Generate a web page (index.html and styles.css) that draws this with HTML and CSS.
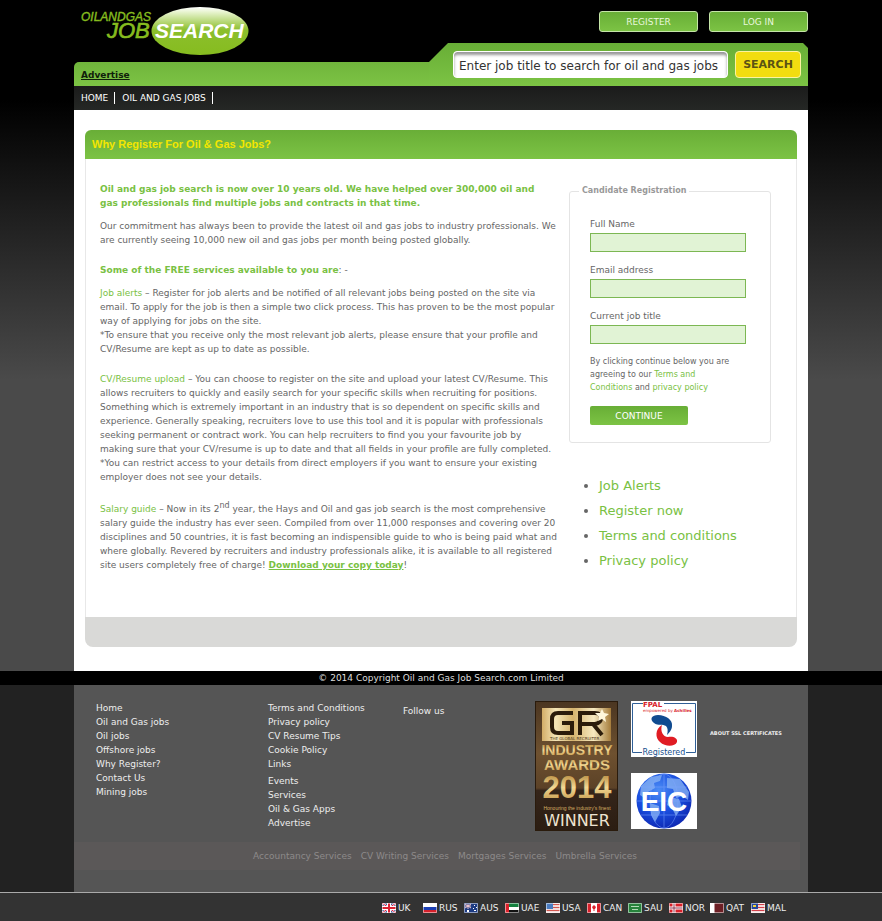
FILE: index.html
```html
<!DOCTYPE html>
<html lang="en">
<head>
<meta charset="utf-8">
<title>Why Register For Oil &amp; Gas Jobs?</title>
<link rel="stylesheet" href="styles.css">
</head>
<body>
<header class="wrap top">
  <div class="top-left">
    <a class="logo" href="#" aria-label="Oil and Gas Job Search">
      <svg width="175" height="56" viewBox="0 0 175 56">
        <defs>
          <linearGradient id="oval" x1="0" y1="0" x2="0" y2="1">
            <stop offset="0" stop-color="#fff"/>
            <stop offset=".12" stop-color="#e4f2c8"/>
            <stop offset=".48" stop-color="#8cbf2c"/>
            <stop offset="1" stop-color="#86bc1f"/>
          </linearGradient>
        </defs>
        <text class="logo-small" x="7" y="21">OILANDGAS</text>
        <text class="logo-job" x="33" y="38">JOB</text>
        <ellipse cx="126" cy="31" rx="48.500" ry="24" fill="url(#oval)"/>
        <text class="logo-search" x="81" y="38">SEARCH</text>
      </svg>
    </a>
    <div class="advert"><a href="#">Advertise</a></div>
  </div>
  <div class="top-right">
    <div class="account"><a class="btn" href="#">REGISTER</a><a class="btn" href="#">LOG IN</a></div>
    <form class="search">
      <input type="text" aria-label="Job title" value="Enter job title to search for oil and gas jobs">
      <button type="button">SEARCH</button>
    </form>
  </div>
</header>
<nav class="wrap nav"><a href="#">HOME</a><a href="#">OIL AND GAS JOBS</a></nav>

<main class="wrap main">
  <section class="panel">
    <h1>Why Register For Oil &amp; Gas Jobs?</h1>
    <div class="panel-body">
      <article class="copy">
        <h2>Oil and gas job search is now over 10 years old. We have helped over 300,000 oil and gas professionals find multiple jobs and contracts in that time.</h2>
        <p class="wide">Our commitment has always been to provide the latest oil and gas jobs to industry professionals. We are currently seeing 10,000 new oil and gas jobs per month being posted globally.</p>
        <p><strong>Some of the FREE services available to you are</strong>: -</p>
        <p class="wide"><a href="#">Job alerts</a> – Register for job alerts and be notified of all relevant jobs being posted on the site via email. To apply for the job is then a simple two click process. This has proven to be the most popular way of applying for jobs on the site.<br>*To ensure that you receive only the most relevant job alerts, please ensure that your profile and CV/Resume are kept as up to date as possible.</p>
        <p class="wide"><a href="#">CV/Resume upload</a> – You can choose to register on the site and upload your latest CV/Resume. This allows recruiters to quickly and easily search for your specific skills when recruiting for positions. Something which is extremely important in an industry that is so dependent on specific skills and experience. Generally speaking, recruiters love to use this tool and it is popular with professionals seeking permanent or contract work. You can help recruiters to find you your favourite job by making&nbsp;sure that your CV/resume is up to date and that all fields in your profile are fully completed.<br>*You can restrict access to your details from direct employers if you want to ensure your existing employer does not see your details.</p>
        <p><a href="#">Salary guide</a> – Now in its 2<sup>nd</sup> year, the Hays and Oil and gas job search is the most comprehensive salary guide the industry has ever seen. Compiled from over 11,000 responses and covering over 20 disciplines and 50 countries, it is fast becoming an indispensible guide to who is being paid what and where globally. Revered by recruiters and industry professionals alike, it is available to all registered site users completely free of charge! <a class="download" href="#">Download your copy today</a>!</p>
      </article>
      <aside class="side">
        <form>
          <fieldset>
            <legend>Candidate Registration</legend>
            <label for="name">Full Name</label><input id="name" type="text">
            <label for="email">Email address</label><input id="email" type="text">
            <label for="job">Current job title</label><input id="job" type="text">
            <p>By clicking continue below you are agreeing to our <a href="#">Terms and Conditions</a> and <a href="#">privacy policy</a></p>
            <button type="button">CONTINUE</button>
          </fieldset>
        </form>
        <ul>
          <li><a href="#">Job Alerts</a></li>
          <li><a href="#">Register now</a></li>
          <li><a href="#">Terms and conditions</a></li>
          <li><a href="#">Privacy policy</a></li>
        </ul>
      </aside>
    </div>
    <div class="panel-foot"></div>
  </section>
</main>

<div class="copyright">© 2014 Copyright Oil and Gas Job Search.com Limited</div>

<footer>
  <div class="wrap foot">
    <div class="foot-cols">
      <ul class="links-a"><li><a href="#">Home</a></li><li><a href="#">Oil and Gas jobs</a></li><li><a href="#">Oil jobs</a></li><li><a href="#">Offshore jobs</a></li><li><a href="#">Why Register?</a></li><li><a href="#">Contact Us</a></li><li><a href="#">Mining jobs</a></li></ul>
      <div class="links-b">
        <ul><li><a href="#">Terms and Conditions</a></li><li><a href="#">Privacy policy</a></li><li><a href="#">CV Resume Tips</a></li><li><a href="#">Cookie Policy</a></li><li><a href="#">Links</a></li></ul>
        <ul><li><a href="#">Events</a></li><li><a href="#">Services</a></li><li><a href="#">Oil &amp; Gas Apps</a></li><li><a href="#">Advertise</a></li></ul>
      </div>
      <div class="follow">Follow us</div>
      <svg class="award" width="83" height="130" viewBox="0 0 83 130">
        <defs>
          <linearGradient id="brown" x1="0" y1="0" x2="0" y2="1"><stop offset="0" stop-color="#4b3621"/><stop offset=".4" stop-color="#6e5130"/><stop offset=".67" stop-color="#5c4227"/><stop offset=".69" stop-color="#35251a"/><stop offset="1" stop-color="#2b1d12"/></linearGradient>
          <linearGradient id="plate" x1="0" y1="0" x2="1" y2="0"><stop offset="0" stop-color="#d2ad68"/><stop offset=".2" stop-color="#f5e6b8"/><stop offset=".45" stop-color="#d5b36d"/><stop offset=".75" stop-color="#f6e9c0"/><stop offset="1" stop-color="#a57c3b"/></linearGradient>
          <linearGradient id="gold" x1="0" y1="0" x2="0" y2="1"><stop offset="0" stop-color="#a87829"/><stop offset=".5" stop-color="#f2d893"/><stop offset="1" stop-color="#bb8a3b"/></linearGradient>
        </defs>
        <rect x=".5" y=".5" width="82" height="129" fill="url(#brown)" stroke="#2a1b0c"/>
        <rect x="7" y="7" width="69" height="33" fill="url(#plate)"/>
        <g fill="none" stroke="#2b1c0b" stroke-width="4">
          <path d="M38 12H23Q17 12 17 18V26Q17 32 23 32H37V22H27"/>
          <path d="M45 34V12H60Q66 12 66 17T60 23H45M58 23L67 34"/>
        </g>
        <path d="M67 8l2 4 5 1-4 3 1 5-4-3-4 2 1-4-4-4 5 0z" fill="#fff8dc"/>
        <text x="15" y="39" class="aw-tiny">THE GLOBAL RECRUITER</text>
        <g fill="url(#gold)">
          <text x="42" y="54" class="aw-mid">INDUSTRY</text>
          <text x="42" y="69" class="aw-mid aw-wide">AWARDS</text>
          <text x="42" y="97" class="aw-year">2014</text>
        </g>
        <text x="42" y="109" class="aw-note">Honouring the industry's finest</text>
        <text x="42" y="125" class="aw-win">WINNER</text>
      </svg>
      <div class="badges">
        <svg width="66" height="56" viewBox="0 0 66 56">
          <rect width="66" height="56" fill="#fff"/>
          <path d="M12 2.500H1.500V51.500H11M33 2.500H64.500V51.500H55" fill="none" stroke="#2f5f97"/>
          <text x="12" y="6" class="fpal">FPAL</text>
          <text x="12" y="11" class="fpal-s">empowered by <tspan class="ach">Achilles</tspan></text>
          <path d="M35 25C32 23 27 25 23 22C18 18 21 14 27 14C35 14 42 19 41 25C41 29 38 32 36 34C37 30 37 27 35 25Z" fill="#104b90"/>
          <path d="M31 24C24 28 24 37 29 41C34 46 44 46 46 41C47 37 42 35 37 36C32 36 29 30 31 24Z" fill="#e01c24"/>
          <text x="33" y="54" class="reg">Registered</text>
        </svg>
        <svg width="66" height="56" viewBox="0 0 66 56">
          <defs><radialGradient id="globe" cx=".4" cy=".3" r=".8"><stop offset="0" stop-color="#4b8cf5"/><stop offset=".5" stop-color="#1a4fe0"/><stop offset="1" stop-color="#0b1fa8"/></radialGradient></defs>
          <rect width="66" height="56" fill="#fff"/>
          <circle cx="33" cy="28" r="27.500" fill="url(#globe)"/>
          <g fill="#8bb6f4" opacity=".75"><path d="M10 13L20 4 31 2 29 8 23 10 24 15 17 19 15 26 9 22Z"/><path d="M19 30L28 33 29 40 24 49 20 42Z"/><path d="M36 5L49 6 58 19 57 27 51 23 45 25 42 16 36 15Z"/><path d="M38 24L48 26 51 34 45 43 41 35 36 32Z"/></g>
          <g fill="none" stroke="#7ea5ff" opacity=".5"><ellipse cx="33" cy="28" rx="14" ry="27"/><path d="M33 1V55M6 28H60M10 14H56M10 42H56"/></g>
          <text x="33" y="38" class="eic">EIC</text>
        </svg>
      </div>
      <a class="ssl" href="#">ABOUT SSL CERTIFICATES</a>
    </div>
    <div class="services"><a href="#">Accountancy Services</a><a href="#">CV Writing Services</a><a href="#">Mortgages Services</a><a href="#">Umbrella Services</a></div>
  </div>
</footer>

<div class="countries">
  <div class="wrap flags">
    <a href="#"><svg width="14" height="10" viewBox="0 0 14 10"><path fill="#334f91" d="M0 0h14v10H0z"/><path d="M0 0L14 10M14 0L0 10" stroke="#fff" stroke-width="2"/><path d="M0 0L14 10M14 0L0 10" stroke="#d24"/><path d="M7 0V10M0 5H14" stroke="#fff" stroke-width="4"/><path d="M7 0V10M0 5H14" stroke="#d23" stroke-width="2"/><path class="edge" d="M.5.5h13v9H.5z"/></svg>UK</a>
    <a href="#"><svg width="14" height="10" viewBox="0 0 14 10"><path fill="#fff" d="M0 0h14v4H0z"/><path fill="#1b3fb5" d="M0 4h14v3H0z"/><path fill="#d4202b" d="M0 7h14v3H0z"/><path class="edge" d="M.5.5h13v9H.5z"/></svg>RUS</a>
    <a href="#"><svg width="14" height="10" viewBox="0 0 14 10"><path fill="#1d3b82" d="M0 0h14v10H0z"/><path d="M1 1L7 5M7 1L1 5M4 1V6M1 3H7" stroke="#f3c9cf"/><path fill="#fff" d="M3 7h2v2H3zM10 2h1v1h-1zM9 5h1v1H9zM12 4h1v1h-1zM10 7h2v1h-2z"/><path class="edge" d="M.5.5h13v9H.5z"/></svg>AUS</a>
    <a href="#"><svg width="14" height="10" viewBox="0 0 14 10"><path fill="#15813f" d="M0 0h14v4H0z"/><path fill="#fff" d="M0 4h14v3H0z"/><path fill="#111" d="M0 7h14v3H0z"/><path fill="#d9202a" d="M0 0h4v10H0z"/><path class="edge" d="M.5.5h13v9H.5z"/></svg>UAE</a>
    <a href="#"><svg width="14" height="10" viewBox="0 0 14 10"><path fill="#f3dada" d="M0 0h14v10H0z"/><path d="M0 1.500H14M0 4.500H14M0 7.500H14" stroke="#d3564f"/><path fill="#4a7cc0" d="M0 0h7v6H0z"/><path class="edge" d="M.5.5h13v9H.5z"/></svg>USA</a>
    <a href="#"><svg width="14" height="10" viewBox="0 0 14 10"><path fill="#d9202a" d="M0 0h14v10H0z"/><path fill="#fff" d="M4 0h6v10H4z"/><path fill="#d9202a" d="M7 2l2 2-1 2H6L5 4zM6.500 6h1v2h-1z"/><path class="edge" d="M.5.5h13v9H.5z"/></svg>CAN</a>
    <a href="#"><svg width="14" height="10" viewBox="0 0 14 10"><path fill="#27833c" d="M0 0h14v10H0z"/><path d="M3 3.500H11M4 6.500H10" stroke="#b5dbb9"/><path class="edge" d="M.5.5h13v9H.5z"/></svg>SAU</a>
    <a href="#"><svg width="14" height="10" viewBox="0 0 14 10"><path fill="#d9202a" d="M0 0h14v10H0z"/><path d="M5 0V10M0 5H14" stroke="#fff" stroke-width="3"/><path d="M5 0V10M0 5H14" stroke="#8a3550"/><path class="edge" d="M.5.5h13v9H.5z"/></svg>NOR</a>
    <a href="#"><svg width="14" height="10" viewBox="0 0 14 10"><path fill="#6d1f25" d="M0 0h14v10H0z"/><path fill="#fff" d="M0 0h4l1 1-1 1 1 1-1 1 1 1-1 1 1 1-1 1 1 1-1 1H0z"/><path class="edge" d="M.5.5h13v9H.5z"/></svg>QAT</a>
    <a href="#"><svg width="14" height="10" viewBox="0 0 14 10"><path fill="#f3dada" d="M0 0h14v10H0z"/><path d="M0 1.500H14M0 4.500H14M0 7.500H14" stroke="#d3404a"/><path fill="#26489c" d="M0 0h7v6H0z"/><path fill="#f2d13c" d="M2 2h3v2H2z"/><path class="edge" d="M.5.5h13v9H.5z"/></svg>MAL</a>
  </div>
</div>
</body>
</html>
```

FILE: styles.css
```css
* { box-sizing: border-box; }
body {
  margin: 0;
  font: 9px/14px "DejaVu Sans", sans-serif;
  color: #666;
  background: linear-gradient(#000 100px, #4a4a4a 380px);
}
a { color: inherit; text-decoration: none; }
ul { margin: 0; padding: 0; list-style: none; }
input, button { font: inherit; border-radius: 0; }
.wrap { max-width: 734px; margin: 0 auto; }

.top { display: flex; height: 86px; }
.top-left { flex: 1; display: flex; flex-direction: column; }
.logo { height: 62px; }
.logo svg { display: block; }
.logo-small, .logo-job, .logo-search { font-family: "Liberation Sans", sans-serif; font-style: italic; }
.logo-small { font-size: 12px; fill: #86bc1f; stroke: #86bc1f; stroke-width: .4; }
.logo-job { font-size: 22px; fill: #86bc1f; stroke: #86bc1f; stroke-width: .7; }
.logo-search { font-size: 21px; font-weight: bold; fill: #fff; }
.advert {
  height: 24px;
  padding: 6px 7px;
  background: linear-gradient(#70b53c, #7cc344);
  border-top-left-radius: 5px;
  font-size: 9px;
  font-weight: bold;
}
.advert a { color: #10200a; text-decoration: underline; }
.top-right { width: 379px; }
.account { display: flex; justify-content: flex-end; gap: 11px; height: 43px; padding-top: 11px; }
.btn {
  width: 99px;
  height: 21px;
  border: 1px solid #c5e5a8;
  border-radius: 3px;
  background: linear-gradient(#68ae36, #7cc344);
  color: #e9f8dc;
  text-align: center;
  line-height: 20px;
}
.search {
  display: flex;
  gap: 7px;
  height: 43px;
  padding: 8px 7px 0 24px;
  background: linear-gradient(#68ae36, #7cc344);
  clip-path: polygon(0 100%, 0 19px, 19px 0, calc(100% - 5px) 0, 100% 5px, 100% 100%);
}
.search input {
  flex: 1;
  min-width: 0;
  height: 27px;
  padding: 3px 5px 0;
  border: 1px solid #fff;
  border-radius: 4px;
  box-shadow: inset 0 3px 3px #999;
  font-size: 12px;
  color: #333;
}
.search button {
  width: 66px;
  height: 27px;
  padding: 0;
  border: 1px solid #fbf3a0;
  border-radius: 4px;
  background: #f2dd10;
  color: #5b5314;
  font-size: 11px;
  font-weight: bold;
}
.nav { display: flex; height: 24px; padding: 6px 0; background: linear-gradient(#1b1b1b, #252725); color: #fff; }
.nav a { padding: 0 6px 0 7px; height: 12px; line-height: 12px; border-right: 1px solid #fff; }

.main { padding: 20px 11px 24px; background: #fff; }
h1 {
  margin: 0;
  padding: 0 7px;
  height: 29px;
  line-height: 28px;
  border-radius: 6px 6px 0 0;
  background: linear-gradient(#69ae37, #7cc344);
  color: #f4e600;
  font-family: "Liberation Sans", sans-serif;
  font-size: 11px;
}
.panel-body { display: flex; min-height: 458px; border: 1px solid #e8e8e8; border-width: 0 1px; }
.copy { flex: 1; padding: 23px 0 0 14px; }
.copy p { margin: 0 0 9px; }
.copy .wide { margin-bottom: 16px; }
h2 { margin: 0 0 9px; padding-right: 12px; font-size: 9px; line-height: 14px; color: #79c143; }
.copy strong, .copy a, .side p a, .side li a { color: #79c143; }
.copy .download { font-weight: bold; text-decoration: underline; }
sup { font-size: 8px; line-height: 12px; }
.side { width: 237px; padding: 25px 25px 0 10px; }
fieldset { margin: 0; padding: 19px 24px 17px 20px; border: 1px solid #e4e4e4; border-radius: 3px; }
legend { margin-left: -11px; padding: 0 3px; color: #999; font-size: 8px; font-weight: bold; }
label { display: block; margin-bottom: 2px; }
fieldset input { display: block; width: 100%; height: 19px; margin-bottom: 11px; border: 1px solid #7cb753; background: #e1f3d5; }
fieldset p { margin: 0 0 12px; padding-right: 10px; font-size: 8px; line-height: 13px; }
fieldset button { width: 98px; height: 19px; border: 0; border-radius: 2px; background: linear-gradient(#68ae36, #7cc344); color: #fff; }
.side ul { padding: 30px 0 0 30px; list-style: disc; font-size: 13px; line-height: 25px; }
.panel-foot { height: 30px; border-radius: 0 0 8px 8px; background: #d9d9d7; }

.copyright { background: #000; color: #ddd; text-align: center; }
footer { background: #222; }
.foot { height: 207px; background: #555; color: #eee; padding-top: 16px; }
.foot-cols { display: flex; height: 141px; }
.links-a { width: 194px; padding-left: 22px; }
.links-b { width: 135px; }
.links-b ul + ul { margin-top: 3px; }
.follow { width: 132px; padding-top: 3px; }
.award { margin-right: 13px; }
.badges { display: flex; flex-direction: column; gap: 16px; margin-right: 13px; }
.ssl { margin-top: 25px; font-size: 5px; font-weight: bold; }
.services { display: flex; justify-content: center; gap: 9px; height: 28px; margin-right: 8px; padding-left: 16px; background: #5b5858; color: #8d8a8a; line-height: 28px; }
.aw-tiny { font: 4px "DejaVu Sans", sans-serif; fill: #4b3418; }
.aw-mid { font: bold 14px "Liberation Sans", sans-serif; text-anchor: middle; }
.aw-wide { font-size: 15px; }
.aw-year { font: bold 31px "Liberation Sans", sans-serif; text-anchor: middle; }
.aw-note { font: 5px "Liberation Sans", sans-serif; fill: #d8ad64; text-anchor: middle; }
.aw-win { font: 16px "DejaVu Sans", sans-serif; fill: #eee4d2; text-anchor: middle; }
.fpal { font: bold 7px "DejaVu Sans", sans-serif; fill: #d8232a; }
.fpal-s { font: 4px "DejaVu Sans", sans-serif; fill: #d8232a; }
.ach { font-weight: bold; }
.reg { font: 8px "DejaVu Sans", sans-serif; fill: #174f8d; text-anchor: middle; }
.eic { font: bold 28px "Liberation Sans", sans-serif; fill: #fff; text-anchor: middle; }

.countries { height: 29px; border-top: 1px solid #aaa; background: #333; color: #eee; }
.flags { display: flex; justify-content: flex-end; padding: 8px 16px 0 0; }
.flags a { display: flex; align-items: center; gap: 2px; width: 41px; white-space: nowrap; }
.edge { fill: none; stroke: #fff; opacity: .5; }
```
